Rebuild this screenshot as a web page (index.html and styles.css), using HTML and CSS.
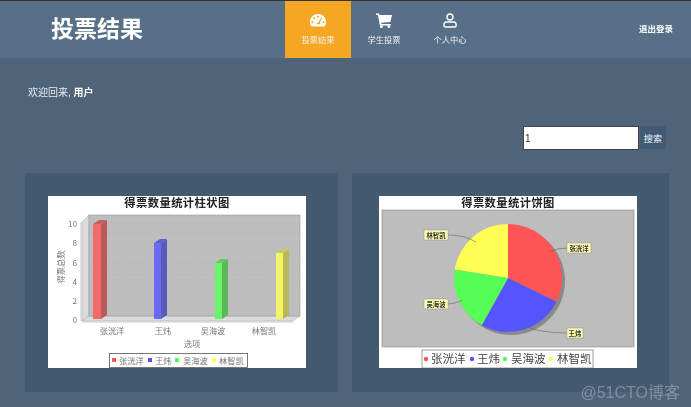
FILE: index.html
```html
<!DOCTYPE html>
<html lang="zh-CN">
<head>
    <meta charset="UTF-8">
    <title>投票结果</title>
    <link rel="stylesheet" href="styles.css">
</head>
<body>
    <header class="top-bar">
        <div class="logo">投票结果</div>
        <nav class="nav">
            <a class="nav-item active">
                <svg class="nav-icon" viewBox="0 0 16 14" width="16" height="14"><path fill="#fff" fill-rule="evenodd" d="M8 0.5C3.6 0.5 0 4 0 8.4c0 1.5.4 2.9 1.1 4.1.2.3.5.5.8.5h12.2c.3 0 .6-.2.8-.5.7-1.2 1.1-2.6 1.1-4.1C16 4 12.4.5 8 .5zM8 2.2a1 1 0 1 1 0 2 1 1 0 0 1 0-2zM4.2 3.8a1 1 0 1 1 0 2 1 1 0 0 1 0-2zM2.4 7.4a1 1 0 1 1 0 2 1 1 0 0 1 0-2zM13.6 7.4a1 1 0 1 1 0 2 1 1 0 0 1 0-2zM11.4 3.4l.9.4-2.6 5.6c.3.4.4.8.3 1.3H6.9c-.2-1.1.7-2 1.8-1.9z"/></svg>
                <span>投票结果</span>
            </a>
            <a class="nav-item">
                <svg class="nav-icon" viewBox="0 0 16 15" width="16" height="15"><path fill="#fff" d="M0 .5h3l.5 1.6H16l-1.6 6.8-9.2.9.3 1.2h9.3v1.500H3.900L1.900 2H0z"/><circle fill="#fff" cx="5.400" cy="13.400" r="1.500"/><circle fill="#fff" cx="12.800" cy="13.400" r="1.500"/></svg>
                <span>学生投票</span>
            </a>
            <a class="nav-item">
                <svg class="nav-icon" viewBox="0 0 14 15" width="14" height="15"><circle fill="none" stroke="#fff" stroke-width="1.400" cx="7" cy="4" r="3"/><path fill="none" stroke="#fff" stroke-width="1.400" d="M3.400 9h7.200c1.400 0 2.500 1.100 2.500 2.500v1.200c0 .7-.6 1.300-1.300 1.300H2.200c-.7 0-1.300-.6-1.300-1.300v-1.200C.9 10.100 2 9 3.400 9z"/></svg>
                <span>个人中心</span>
            </a>
        </nav>
        <a class="logout">退出登录</a>
    </header>

    <main class="content">
        <p class="welcome">欢迎回来, <b>用户</b></p>

        <form class="search">
            <input class="search-input" type="text" value="1">
            <button class="search-button" type="button">搜索</button>
        </form>

        <div class="charts">
            <section class="card card-bar">
                <svg class="chart" viewBox="0 -4 258 176" width="258" height="176">
                    <rect width="258" height="172" fill="#fff"/>
                    <text class="chart-title" x="129" y="11" text-anchor="middle">得票数量统计柱状图</text>
                    <polygon points="34,26 41,19 41,120 34,125" fill="#dcdcdc" stroke="#aaa" stroke-width=".5"/>
                    <polygon points="34,125 41,120 252,120 245,125" fill="#dcdcdc" stroke="#aaa" stroke-width=".5"/>
                    <rect x="41" y="19" width="211" height="101" fill="#bdbdbd" stroke="#999" stroke-width=".6"/>
                    <g stroke="#d2d2d2" stroke-width=".6" stroke-dasharray="1.500 1.500">
                        <line x1="41" y1="24" x2="252" y2="24"/>
                        <line x1="41" y1="43" x2="252" y2="43"/>
                        <line x1="41" y1="62" x2="252" y2="62"/>
                        <line x1="41" y1="81" x2="252" y2="81"/>
                        <line x1="41" y1="100" x2="252" y2="100"/>
                    </g>
                    <line x1="34" y1="126" x2="245" y2="126" stroke="#aaa" stroke-width=".6"/>
                    <line x1="33" y1="26" x2="33" y2="125" stroke="#aaa" stroke-width=".6"/>
                    <g>
                        <rect x="45" y="28" width="8" height="95" fill="#f46a6a"/>
                        <polygon points="53,28 59,24 59,119 53,123" fill="#b85a5a"/>
                        <polygon points="45,28 51,24 59,24 53,28" fill="#c96060"/>
                        <rect x="106" y="47" width="7" height="76" fill="#6a6af4"/>
                        <polygon points="113,47 119,43 119,119 113,123" fill="#5a5ab8"/>
                        <polygon points="106,47 112,43 119,43 113,47" fill="#6060c9"/>
                        <rect x="167" y="67" width="7" height="56" fill="#6af46a"/>
                        <polygon points="174,67 180,63 180,119 174,123" fill="#5ab85a"/>
                        <polygon points="167,67 173,63 180,63 174,67" fill="#60c960"/>
                        <rect x="228" y="57" width="7" height="66" fill="#f4f46a"/>
                        <polygon points="235,57 241,53 241,119 235,123" fill="#b8b85a"/>
                        <polygon points="228,57 234,53 241,53 235,57" fill="#c9c960"/>
                    </g>
                    <g class="axis-text" text-anchor="end">
                        <text x="29" y="31">10</text>
                        <text x="29" y="50">8</text>
                        <text x="29" y="70">6</text>
                        <text x="29" y="89">4</text>
                        <text x="29" y="108">2</text>
                        <text x="29" y="127">0</text>
                    </g>
                    <g class="axis-text" text-anchor="middle">
                        <text x="64" y="138">张洸洋</text>
                        <text x="115" y="138">王炜</text>
                        <text x="165" y="138">吴海波</text>
                        <text x="216" y="138">林智凯</text>
                        <text x="144" y="151">选项</text>
                        <text x="0" y="0" transform="translate(16 71) rotate(-90)">得票总数</text>
                    </g>
                    <rect x="61.500" y="157.500" width="138" height="14" fill="#fff" stroke="#555" stroke-width=".8"/>
                    <g class="axis-text">
                        <rect x="64" y="162" width="4" height="4" fill="#f55"/>
                        <text x="71" y="168">张洸洋</text>
                        <rect x="100" y="162" width="4" height="4" fill="#55f"/>
                        <text x="107" y="168">王炜</text>
                        <rect x="127" y="162" width="4" height="4" fill="#5f5"/>
                        <text x="135" y="168">吴海波</text>
                        <rect x="164" y="162" width="4" height="4" fill="#ff5"/>
                        <text x="171" y="168">林智凯</text>
                    </g>
                </svg>
            </section>

            <section class="card card-pie">
                <svg class="chart" viewBox="0 -4 258 176" width="258" height="176">
                    <rect width="258" height="172" fill="#fff"/>
                    <text class="chart-title" x="129" y="11" text-anchor="middle">得票数量统计饼图</text>
                    <rect x="3" y="14" width="252" height="137" fill="#bdbdbd" stroke="#888" stroke-width=".6"/>
                    <circle cx="132" cy="85" r="54" fill="#8a8a8a"/>
                    <path d="M129 82V28A54 54 0 0 1 177.500 105.700Z" fill="#f55"/>
                    <path d="M129 82L177.500 105.700A54 54 0 0 1 102.800 129.200Z" fill="#55f"/>
                    <path d="M129 82L102.800 129.200A54 54 0 0 1 75.700 73.600Z" fill="#5f5"/>
                    <path d="M129 82L75.700 73.600A54 54 0 0 1 129 28Z" fill="#ff5"/>
                    <g fill="none" stroke="#666" stroke-width=".6">
                        <path d="M170 56Q178 52 188 52"/>
                        <path d="M143 129Q160 137 188 137"/>
                        <path d="M84 104Q76 108 69 108"/>
                        <path d="M97 46Q86 39 69 39"/>
                    </g>
                    <g fill="#ffffb0" stroke="#999" stroke-width=".6">
                        <rect x="188" y="47" width="24" height="10"/>
                        <rect x="188" y="132" width="16" height="10"/>
                        <rect x="45" y="103" width="24" height="10"/>
                        <rect x="45" y="34" width="24" height="10"/>
                    </g>
                    <g class="pie-label" text-anchor="middle">
                        <text x="200" y="55">张洸洋</text>
                        <text x="196" y="140">王炜</text>
                        <text x="57" y="111">吴海波</text>
                        <text x="57" y="42">林智凯</text>
                    </g>
                    <rect x="43" y="154" width="171" height="18" fill="#fff" stroke="#888" stroke-width=".8"/>
                    <circle cx="47" cy="163" r="2.200" fill="#f55"/>
                    <circle cx="93" cy="163" r="2.200" fill="#55f"/>
                    <circle cx="126" cy="163" r="2.200" fill="#5f5"/>
                    <circle cx="172" cy="163" r="2.200" fill="#ff5"/>
                    <g class="pie-legend">
                        <text x="52" y="167">张洸洋</text>
                        <text x="98" y="167">王炜</text>
                        <text x="132" y="167">吴海波</text>
                        <text x="178" y="167">林智凯</text>
                    </g>
                </svg>
            </section>
        </div>
    </main>

    <div class="watermark">@51CTO博客</div>
</body>
</html>
```

FILE: styles.css
```css
html, body {
    height: 100%;
}
body {
    margin: 0;
    overflow: hidden;
    position: relative;
    background-color: #4f6479;
    color: #fff;
    font-family: "Liberation Sans", "Noto Sans CJK SC", sans-serif;
}
.top-bar {
    display: flex;
    height: 57px;
    background-color: #577087;
    border-top: 1px solid #333;
    filter: blur(.3px);
}
.logo {
    width: 285px;
    padding-left: 51px;
    box-sizing: border-box;
    font-size: 23px;
    font-weight: bold;
    line-height: 57px;
}
.nav {
    display: flex;
}
.nav-item {
    width: 66px;
    display: flex;
    flex-direction: column;
    align-items: center;
    padding-top: 12px;
    box-sizing: border-box;
    font-size: 8.250px;
    color: #eef2f5;
}
.nav-item.active {
    background-color: #f5a623;
}
.nav-icon {
    height: 15px;
    margin-bottom: 5px;
}
.logout {
    margin-left: auto;
    margin-right: 18px;
    font-size: 8.500px;
    font-weight: bold;
    line-height: 57px;
}
.content {
    padding: 0 22px 0 25px;
    filter: blur(.3px);
}
.welcome {
    margin: 0;
    padding: 29px 0 0 3px;
    font-size: 10px;
    line-height: 12px;
    color: #e6ebef;
}
.welcome b {
    color: #fff;
}
.search {
    display: flex;
    justify-content: flex-end;
    align-items: flex-start;
    gap: 1px;
    margin-top: 27px;
    padding-right: 3px;
}
.search-input {
    width: 116px;
    height: 24px;
    box-sizing: border-box;
    padding: 0 1px;
    background-color: #fff;
    border: 1px solid #444;
    outline: none;
    font-family: "Liberation Sans", sans-serif;
    font-size: 10px;
    color: #333;
}
.search-button {
    width: 26px;
    height: 23px;
    padding: 0;
    background-color: #435a75;
    border: none;
    border-radius: 2px;
    font-family: "Noto Sans CJK SC", sans-serif;
    font-size: 9.200px;
    color: #eef2f5;
}
.charts {
    display: grid;
    grid-template-columns: 313px 317px;
    gap: 14px;
    margin-top: 23px;
}
.card {
    height: 219px;
    padding-top: 19px;
    box-sizing: border-box;
    background-color: #435a70;
}
.card-bar {
    padding-left: 23px;
}
.card-pie {
    padding-left: 27px;
}
.chart {
    display: block;
    filter: blur(.3px);
    font-family: "Noto Sans CJK SC", sans-serif;
}
.chart-title {
    font-size: 11.300px;
    font-weight: bold;
    letter-spacing: .4px;
    fill: #222;
}
.axis-text {
    font-size: 8.200px;
    fill: #777;
}
.pie-label {
    font-size: 6.400px;
    font-weight: bold;
    fill: #333;
}
.pie-legend {
    font-size: 11.500px;
    fill: #444;
}
.watermark {
    position: absolute;
    right: 11px;
    top: 379px;
    font-family: "Liberation Sans", "Noto Sans CJK SC", sans-serif;
    font-size: 16px;
    color: rgba(190, 200, 210, .45);
}
```
